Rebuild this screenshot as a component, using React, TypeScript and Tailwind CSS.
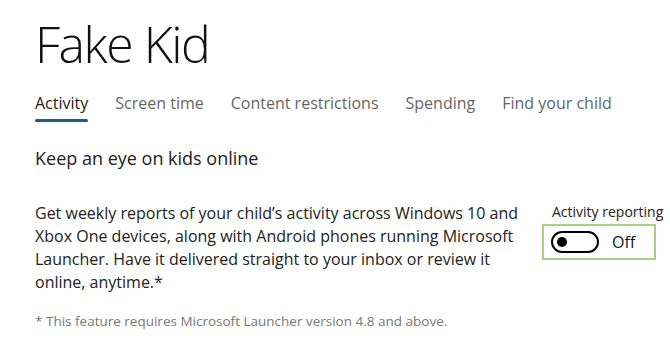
import React from "react";

const TABS = ["Activity", "Screen time", "Content restrictions", "Spending", "Find your child"];

export default function App() {
  return (
    <div
      className="h-[353px] w-[670px] overflow-hidden bg-white pl-[35px] text-[#222]"
      style={{ fontFamily: '"Open Sans", "Noto Sans", sans-serif' }}
    >
      <h1 className="pt-[14px] text-[50px] font-light leading-[60px] tracking-[-1.5px] text-[#111]">
        Fake Kid
      </h1>

      {/* tabs */}
      <nav className="mt-[17px] flex gap-[27px]">
        {TABS.map((tab, i) => (
          <div key={tab} className="flex flex-col">
            <span
              className={
                i === 0
                  ? "text-[16px] leading-[24px] text-[#222]"
                  : "text-[16px] leading-[24px] text-[#666]"
              }
            >
              {tab}
            </span>
            <span
              className={
                i === 0 ? "mt-[4px] h-[3px] rounded-full bg-[#1b5d88]" : "mt-[4px] h-[3px]"
              }
            />
          </div>
        ))}
      </nav>

      <h2 className="mt-[24px] text-[18px] leading-[24px] text-[#222]">
        Keep an eye on kids online
      </h2>

      <div className="mt-[32px] flex">
        <p className="w-[507px] text-[16px] leading-[23px] text-[#222]">
          Get weekly reports of your child’s activity across Windows 10 and Xbox One
          devices, along with Android phones running Microsoft Launcher. Have it
          delivered straight to your inbox or review it online, anytime.*
        </p>
        <div className="flex flex-col">
          <span className="ml-[10px] text-[14px] leading-[20px] text-[#222]">
            Activity reporting
          </span>
          <div className="mt-[2px] flex h-[36px] w-[114px] items-center border-2 border-[#a9cf82] pl-[7px]">
            <div className="flex h-[22px] w-[48px] items-center rounded-full border-2 border-black pl-[4px]">
              <span className="h-[10px] w-[10px] rounded-full bg-black" />
            </div>
            <span className="ml-[13px] text-[16px] text-[#111]">Off</span>
          </div>
        </div>
      </div>

      <p className="mt-[18px] text-[13.5px] leading-[18px] text-[#777]">
        * This feature requires Microsoft Launcher version 4.8 and above.
      </p>
    </div>
  );
}
